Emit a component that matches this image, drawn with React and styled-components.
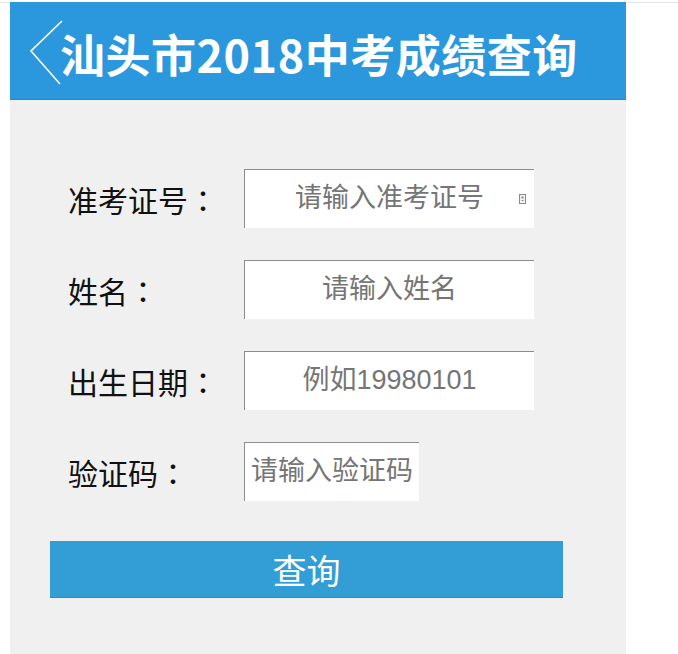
import styled, { createGlobalStyle } from "styled-components";

const GlobalStyle = createGlobalStyle`
  html, body {
    margin: 0;
    padding: 0;
    background: #ffffff;
  }
  body {
    padding-top: 2px;
    font-family: "Liberation Sans", "Noto Sans CJK SC", sans-serif;
  }
`;

const TopLine = styled.div`
  height: 1px;
  background: #e6e6e6;
`;

const Wrapper = styled.div`
  width: 616px;
  margin-left: 10px;
  margin-top: -1px;
`;

const Header = styled.header`
  height: 97px;
  background: #2b98dd;
  border-bottom: 1px solid #4d7d9e;
  display: flex;
  align-items: center;
  padding-left: 20px;
`;

const BackIcon = styled.svg`
  width: 34px;
  height: 66px;
  flex-shrink: 0;
  margin-top: 4px;
`;

const Title = styled.h1`
  margin: 6px 0 0 -4px;
  color: #ffffff;
  font-family: "Noto Sans CJK SC", sans-serif;
  font-weight: 700;
  font-size: 45px;
  line-height: 1;
  letter-spacing: 0.5px;
`;

const Panel = styled.main`
  background: #f0f0f0;
  box-sizing: border-box;
  height: 556px;
  padding: 68px 0 0 40px;
`;

const Row = styled.div`
  display: flex;
  align-items: center;
  height: 60px;
  margin-bottom: 31px;
`;

const Label = styled.label`
  width: 176px;
  padding-left: 18px;
  font-family: "Noto Sans CJK SC", sans-serif;
  font-size: 30px;
  color: #111111;
  margin-top: 2px;
`;

const Colon = styled.span`
  font-family: "Noto Sans CJK TC", sans-serif;
`;

const InputBox = styled.div`
  position: relative;
  width: ${({ $w }) => $w}px;
  height: 59px;
  background: #ffffff;
  border-top: 1px solid #8c8c8c;
  border-left: 1px solid #8c8c8c;
  box-sizing: border-box;
`;

const Field = styled.input`
  width: 100%;
  height: 100%;
  border: none;
  outline: none;
  background: transparent;
  box-sizing: border-box;
  padding: ${({ $left }) => ($left ? "0 0 0 6px" : "0")};
  text-align: ${({ $left }) => ($left ? "left" : "center")};
  font-family: "Liberation Sans", "Noto Sans CJK SC", sans-serif;
  font-size: 27px;
  color: #333;
  &::placeholder {
    color: #757575;
  }
`;

const KeyIcon = styled.svg`
  position: absolute;
  right: 8px;
  top: 24px;
  width: 7px;
  height: 10px;
`;

const SubmitButton = styled.button`
  display: block;
  width: 513px;
  height: 57px;
  margin: 40px 0 0 0;
  border: none;
  border-bottom: 1px solid #3a88b8;
  background: #339dd6;
  color: #ffffff;
  font-family: "Liberation Sans", "Noto Sans CJK SC", sans-serif;
  font-size: 34px;
  padding: 0;
  cursor: pointer;
`;

const fields = [
  { label: "准考证号", placeholder: "请输入准考证号", width: 290, icon: true },
  { label: "姓名", placeholder: "请输入姓名", width: 290 },
  { label: "出生日期", placeholder: "例如19980101", width: 290 },
  { label: "验证码", placeholder: "请输入验证码", width: 175, left: true },
];

export default function App() {
  return (
    <>
      <GlobalStyle />
      <TopLine />
      <Wrapper>
        <Header>
          <BackIcon viewBox="0 0 34 66">
            <polyline
              points="32,1 1,31 30,64"
              fill="none"
              stroke="#ffffff"
              strokeWidth="1.6"
            />
          </BackIcon>
          <Title>汕头市2018中考成绩查询</Title>
        </Header>
        <Panel>
          {fields.map((f) => (
            <Row key={f.label}>
              <Label>
                {f.label}
                <Colon>：</Colon>
              </Label>
              <InputBox $w={f.width}>
                <Field placeholder={f.placeholder} $left={f.left} />
                {f.icon && (
                  <KeyIcon viewBox="0 0 7 10">
                    <rect x="0.5" y="0.5" width="6" height="9" fill="#f4f4f4" stroke="#8a8a8a" />
                    <rect x="2.5" y="2.5" width="2" height="2" fill="#8a8a8a" />
                    <rect x="2.5" y="6" width="2" height="1" fill="#8a8a8a" />
                  </KeyIcon>
                )}
              </InputBox>
            </Row>
          ))}
          <SubmitButton>查询</SubmitButton>
        </Panel>
      </Wrapper>
    </>
  );
}
